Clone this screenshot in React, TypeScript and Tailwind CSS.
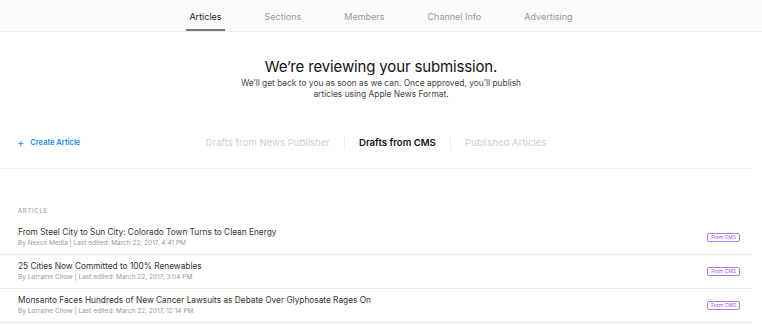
import React from "react";

const navTabs = ["Articles", "Sections", "Members", "Channel Info", "Advertising"];

const articles = [
  {
    title: "From Steel City to Sun City: Colorado Town Turns to Clean Energy",
    meta: "By Nexus Media | Last edited: March 22, 2017, 4:41 PM",
  },
  {
    title: "25 Cities Now Committed to 100% Renewables",
    meta: "By Lorraine Chow | Last edited: March 22, 2017, 3:04 PM",
  },
  {
    title:
      "Monsanto Faces Hundreds of New Cancer Lawsuits as Debate Over Glyphosate Rages On",
    meta: "By Lorraine Chow | Last edited: March 22, 2017, 12:14 PM",
  },
];

const App = () => {
  return (
    <div className="min-h-screen bg-white font-['Inter',sans-serif] text-[#222]">
      {/* top nav */}
      <nav className="flex h-8 justify-center gap-[37px] border-b border-[#ececec] bg-[#fafafa]">
        {navTabs.map((tab, i) => (
          <div
            key={tab}
            className={
              i === 0
                ? "flex items-end border-b-2 border-[#777] px-[3px] pb-[6px] text-[9px] text-[#222]"
                : "flex items-end px-[3px] pb-[8px] text-[9px] text-[#999]"
            }
          >
            {tab}
          </div>
        ))}
      </nav>

      <section className="flex flex-col items-center pt-[25px]">
        <h1 className="text-[15px] leading-[20px] font-normal tracking-[-0.01em] text-[#111]">
          We’re reviewing your submission.
        </h1>
        <p className="mt-[1px] w-[290px] text-center text-[8.4px] leading-[11px] text-[#444]">
          We’ll get back to you as soon as we can. Once approved, you’ll publish
          articles using Apple News Format.
        </p>
      </section>

      <div className="mr-[10px]">
        <div className="mt-[33px] grid h-[36px] grid-cols-[1fr_auto_1fr] items-start border-b border-[#f0f0f0] pt-[4px]">
          <button className="flex h-[12px] items-center gap-[6px] pl-[17px] text-[7.5px] font-semibold text-[#1a8cf0]">
            <span className="text-[11px] leading-none font-normal">+</span>
            Create Article
          </button>
          <div className="flex h-[12px] items-center text-[9.6px]">
            <span className="text-[#cfcfcf]">Drafts from News Publisher</span>
            <span className="mx-[14px] h-[14px] w-px bg-[#eee]" />
            <span className="font-semibold text-[#111]">Drafts from CMS</span>
            <span className="mx-[14px] h-[14px] w-px bg-[#eee]" />
            <span className="text-[#cfcfcf]">Published Articles</span>
          </div>
          <div />
        </div>

        <div className="pl-[18px] pt-[37px] text-[6px] tracking-[0.12em] text-[#999]">
          ARTICLE
        </div>

        <ul className="mt-[6px]">
          {articles.map((a) => (
            <li
              key={a.title}
              className="flex h-[34px] items-center justify-between border-b border-[#ececec] pr-[12px] pl-[18px]"
            >
              <div className="flex flex-col">
                <span className="text-[8.3px] leading-[11px] text-[#333]">
                  {a.title}
                </span>
                <span className="text-[6.5px] leading-[10px] text-[#999]">
                  {a.meta}
                </span>
              </div>
              <span className="rounded-[2px] border border-[#b57ae6] px-[3px] text-[5px] leading-[7px] text-[#9b55d6]">
                From CMS
              </span>
            </li>
          ))}
        </ul>
      </div>
    </div>
  );
};

export default App;
